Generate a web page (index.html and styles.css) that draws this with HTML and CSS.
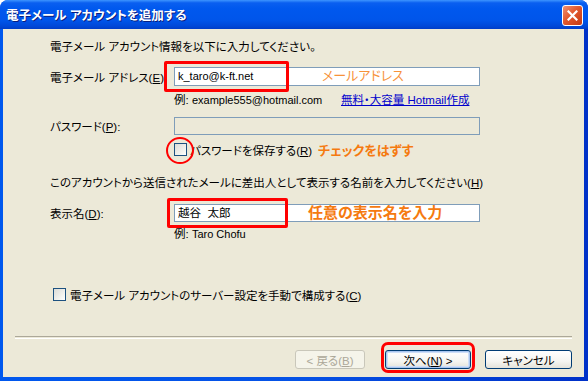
FILE: index.html
```html
<!DOCTYPE html>
<html lang="ja">
<head>
    <meta charset="UTF-8">
    <title>電子メール アカウントを追加する</title>
    <link rel="stylesheet" href="styles.css">
</head>
<body>
    <div class="window">
        <div class="titlebar">
            <span class="title">電子メール アカウントを追加する</span>
            <span class="close-btn">
                <svg width="11" height="11" viewBox="0 0 11 11"><path d="M1.5 1.5 L9.5 9.5 M9.5 1.5 L1.5 9.5" stroke="#fff" stroke-width="2.2" stroke-linecap="square"/></svg>
            </span>
        </div>
        <div class="panel">
            <p class="intro">電子メール アカウント情報を以下に入力してください。</p>

            <div class="row row-email">
                <span class="label">電子メール アドレス(<u>E</u>):</span>
                <div class="field"><span class="latin">k_taro@k-ft.net</span></div>
            </div>
            <div class="hint-row">
                <span class="hint">例: <span class="latin">example555@hotmail.com</span></span>
                <a class="link" href="#">無料・大容量 Hotmail作成</a>
            </div>

            <div class="row row-pass">
                <span class="label">パスワード(<u>P</u>):</span>
                <div class="field disabled"></div>
            </div>
            <div class="check-row save-row">
                <span class="checkbox"></span>
                <span>パスワードを保存する(<u>R</u>)</span>
            </div>

            <p class="desc">このアカウントから送信されたメールに差出人として表示する名前を入力してください(<u>H</u>)</p>

            <div class="row row-name">
                <span class="label">表示名(<u>D</u>):</span>
                <div class="field">越谷&nbsp;&nbsp;太郎</div>
            </div>
            <div class="hint-row hint-name">
                <span class="hint">例: <span class="latin">Taro Chofu</span></span>
            </div>

            <div class="check-row manual-row">
                <span class="checkbox"></span>
                <span>電子メール アカウントのサーバー設定を手動で構成する(<u>C</u>)</span>
            </div>

            <div class="separator"></div>

            <div class="buttons">
                <button class="btn btn-back" disabled>&lt; 戻る(<u>B</u>)</button>
                <button class="btn btn-next">次へ(<u>N</u>) &gt;</button>
                <button class="btn btn-cancel">キャンセル</button>
            </div>

            <!-- 注釈 -->
            <span class="mark mark-email"></span>
            <span class="note note-email">メールアドレス</span>
            <span class="mark-circle"></span>
            <span class="note note-check">チェックをはずす</span>
            <span class="mark mark-name"></span>
            <span class="note note-name">任意の表示名を入力</span>
            <span class="mark mark-next"></span>
        </div>
    </div>
</body>
</html>
```

FILE: styles.css
```css
body {
    margin: 0;
    background: #fff;
}

.window {
    width: 588px;
    height: 381px;
    display: flex;
    flex-direction: column;
    background: linear-gradient(90deg, #0058EE 0, #0552E6 50%, #0031C8 100%);
    border-radius: 8px 8px 0 0;
    font-family: "Liberation Sans", "Noto Sans CJK JP", sans-serif;
    font-size: 11.5px;
    color: #000;
}

.titlebar {
    height: 29px;
    flex: none;
    display: flex;
    align-items: center;
    justify-content: space-between;
    padding: 0 5px 0 6px;
    border-radius: 8px 8px 0 0;
    background: linear-gradient(#3D95FF 0, #0A5FF0 10%, #0058EE 30%, #0055EA 70%, #0048D8 90%, #003DC8 100%);
}

.title {
    color: #fff;
    font-weight: bold;
    font-size: 12.5px;
    font-feature-settings: "palt";
    text-shadow: 1px 1px 0 #0A1E80;
}

.close-btn {
    width: 19px;
    height: 19px;
    margin-top: 2px;
    display: flex;
    align-items: center;
    justify-content: center;
    border: 1px solid #fff;
    border-radius: 3px;
    background: linear-gradient(135deg, #F09274 0, #E2582E 45%, #C43A12 100%);
}

.panel {
    position: relative;
    flex: 1;
    margin: 0 4px 4px 3px;
    padding: 11px 12px 0 47px;
    background: #ECE9D8;
    font-feature-settings: "palt";
}

.latin {
    font-size: 11px;
}

.intro,
.desc {
    margin: 0;
    height: 14px;
    line-height: 14px;
}

.row {
    display: flex;
    align-items: center;
}

.label {
    width: 124px;
    flex: none;
}

.field {
    box-sizing: border-box;
    width: 306px;
    height: 19px;
    line-height: 17px;
    padding: 0 0 0 3px;
    border: 1px solid #7F9DB9;
    background: #fff;
}

.field.disabled {
    height: 18px;
    background: #ECE9D8;
}

.row-email {
    margin-top: 13px;
}

.hint-row {
    display: flex;
    height: 14px;
    line-height: 14px;
    margin: 7px 0 0 124px;
}

.hint {
    width: 167px;
    flex: none;
}

.link {
    color: #0000CC;
    text-decoration: underline;
}

.row-pass {
    margin-top: 10px;
}

.check-row {
    display: flex;
    align-items: center;
    gap: 3px;
    height: 13px;
}

.checkbox {
    width: 11px;
    height: 11px;
    flex: none;
    border: 1px solid #1C5180;
    background: linear-gradient(135deg, #DCDCD7 0, #F4F4F0 70%, #fff 100%);
}

.save-row {
    margin: 8px 0 0 124px;
}

.desc {
    margin-top: 20px;
}

.row-name {
    margin-top: 14px;
}

.row-name .field {
    height: 18px;
    line-height: 16px;
}

.hint-name {
    margin-top: 5px;
}

.manual-row {
    margin: 47px 0 0 3px;
    gap: 4px;
}

.separator {
    margin: 35px 0 0 -35px;
    height: 1px;
    border-top: 1px solid #ACA899;
    border-bottom: 1px solid #fff;
}

.buttons {
    display: flex;
    justify-content: flex-end;
    margin-top: 11px;
}

.btn {
    height: 19px;
    padding: 0;
    border: 1px solid #003C74;
    border-radius: 3px;
    background: linear-gradient(#FFFFFF 0, #F5F5F1 60%, #E3E2DA 100%);
    font-family: "Liberation Sans", "Noto Sans CJK JP", sans-serif;
    font-size: 11.5px;
    font-feature-settings: "palt";
    color: #000;
}

.btn-back {
    width: 70px;
    margin-right: 20px;
    border-color: #C9C7BA;
    background: #F5F4EA;
    color: #ACA899;
}

.btn-next {
    width: 86px;
    margin-right: 14px;
    box-shadow: inset 0 0 0 1px #A8C5F0, inset 0 0 0 2px #CEDEF7;
}

.btn-cancel {
    width: 87px;
}

/* 注釈 */
.mark {
    position: absolute;
    border: 3px solid #F00;
    border-radius: 2px;
    box-sizing: border-box;
}

.mark-email {
    left: 161px;
    top: 32px;
    width: 125px;
    height: 31px;
}

.mark-name {
    left: 164px;
    top: 169px;
    width: 121px;
    height: 30px;
}

.mark-next {
    left: 378px;
    top: 313px;
    width: 94px;
    height: 31px;
    border-radius: 7px;
}

.mark-circle {
    position: absolute;
    left: 163px;
    top: 108px;
    width: 28px;
    height: 27px;
    box-sizing: border-box;
    border: 2px solid #F00;
    border-radius: 50%;
}

.note {
    position: absolute;
    color: #F7923A;
    line-height: 16px;
    font-family: "Noto Sans CJK JP", sans-serif;
}

.note-email {
    left: 319px;
    top: 38px;
    font-size: 13px;
}

.note-check {
    left: 315px;
    top: 113px;
    font-size: 13px;
    font-weight: bold;
    color: #F57A10;
}

.note-name {
    left: 305px;
    top: 175px;
    font-size: 15px;
    font-weight: bold;
    color: #F57A10;
}
```
